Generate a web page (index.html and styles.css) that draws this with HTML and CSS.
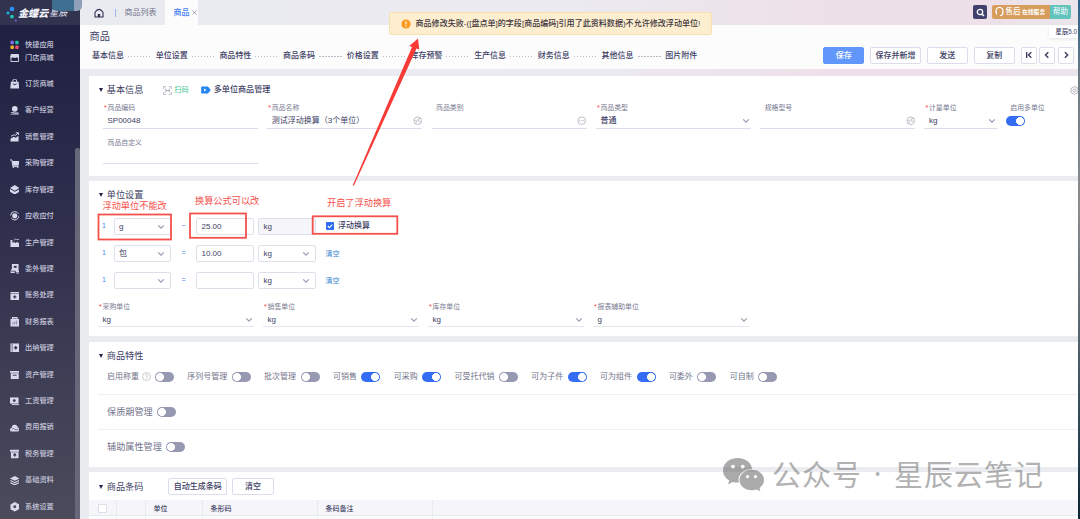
FILE: index.html
```html
<!DOCTYPE html>
<html>
<head>
<meta charset="utf-8">
<title>商品</title>
<link rel="stylesheet" href="styles.css">
</head>
<body>
<svg class="defs" width="0" height="0">
  <symbol id="chev" viewBox="0 0 8 6"><path d="M1.2 1.4 4 4.2 6.8 1.4" fill="none" stroke="#9a9cb2" stroke-width="1.2"/></symbol>
  <symbol id="globe" viewBox="0 0 10 10"><g fill="none" stroke="#b4b5c0" stroke-width=".9"><circle cx="5" cy="5" r="4"/><path d="M1.2 4.2C3 5.6 4.500 5 5.500 3.200L8.200 2.400M5 4.500 8.500 6.500M2.500 8 4.500 5.500"/></g></symbol>
</svg>
<div class="app">
  <aside class="side">
    <div class="brand">
      <svg class="logo" width="12" height="16" viewBox="0 0 12 16"><circle cx="6" cy="3" r="2.300" fill="#2f8df5"/><circle cx="2" cy="7" r="1.500" fill="#20b7e8"/><circle cx="6" cy="10.600" r="1.900" fill="#1fc7b5"/><circle cx="9.800" cy="14.600" r="1.100" fill="#7a5bd8"/></svg>
      <span class="brand-a">金蝶云</span><span class="brand-b">星辰</span>
    </div>
    <nav class="menu">
      <a class="mi first"><svg viewBox="0 0 10 10"><rect x=".5" y=".8" width="3.600" height="3.600" rx="1" fill="#8a6cf0"/><rect x="5.500" y=".8" width="3.600" height="3.600" rx="1" fill="#1cc8a8"/><rect x=".5" y="5.800" width="3.600" height="3.600" rx="1" fill="#f7b52c"/><rect x="5.500" y="5.800" width="3.600" height="3.600" rx="1" fill="#f0506e"/></svg>快捷应用</a>
      <a class="mi second"><svg viewBox="0 0 10 10"><path d="M1 1h8l1 3.500q-1.500 1.500-3 0-2 1.500-4 0-1.500 1.500-3 0z"/><path d="M1 5v4h8V5" fill="none" stroke="#d9d9ee"/></svg>门店商城</a>
      <a class="mi"><svg viewBox="0 0 10 10"><path d="M1 3h8l.7 7H.3z"/><path d="M3 4V2a2 2 0 0 1 4 0v2" fill="none" stroke="#d9d9ee" stroke-width="1"/><path d="M3 5q2 2 4 0" fill="none" stroke="#2a2a49"/></svg>订货商城</a>
      <a class="mi"><svg viewBox="0 0 10 10"><circle cx="5" cy="3" r="3"/><path d="M1 7.500q2-1.500 3 0h5M.5 9.500h9" fill="none" stroke="#d9d9ee" stroke-width="1.100"/></svg>客户经营</a>
      <a class="mi"><svg viewBox="0 0 10 10"><path d="M.5 7 4 5l2 1 3-2v6H.5z"/><path d="M1 4.500 4 3l2 .5L8.500 1M6 .8h3v2.500" fill="none" stroke="#d9d9ee"/></svg>销售管理</a>
      <a class="mi"><svg viewBox="0 0 10 10"><path d="M2 2h8L9 7H3z"/><path d="M0 1h2l1 7h6" fill="none" stroke="#d9d9ee"/><circle cx="3.500" cy="9.200" r=".8"/><circle cx="8.300" cy="9.200" r=".8"/></svg>采购管理</a>
      <a class="mi"><svg viewBox="0 0 10 10"><path d="M5 0l5 3.200L5 6 0 3.200zM0 4.300 5 7.200l5-2.900V7L5 10 0 7z"/></svg>库存管理</a>
      <a class="mi"><svg viewBox="0 0 10 10"><circle cx="5" cy="5" r="4.400" fill="none" stroke="#d9d9ee" stroke-dasharray="11 2.800"/><circle cx="5" cy="5" r="2.700"/></svg>应收应付</a>
      <a class="mi"><svg viewBox="0 0 10 10"><path d="M.5 2h2v3L5 4v1.500L8 4v1h1.500v5h-9z"/><path d="M4 2.500q1.500-2 3-1t3-.5" fill="none" stroke="#d9d9ee" stroke-width=".8"/></svg>生产管理</a>
      <a class="mi"><svg viewBox="0 0 10 10"><path d="M2 0h7v7h1v1.500H6V7H1V5.500h1z"/><path d="M0 8h5v1.500H1zM6 9h4v1H7z"/><path d="M4 2h3v2H4z" fill="#34344f"/></svg>委外管理</a>
      <a class="mi"><svg viewBox="0 0 10 10"><path d="M.5 1h9v1.400h-9zM.5 3h9v6.500h-9z"/><path d="M5 4.500v3.500M3.300 6.200h3.400" stroke="#34344f" stroke-width="1.200"/></svg>账务处理</a>
      <a class="mi"><svg viewBox="0 0 10 10"><path d="M2 0h6v2h1.500v8h-9V2H2z"/><path d="M3 5.500V8M5 4.500V8M7 3.800V8M3 1.500h4" stroke="#6f6f90" stroke-width=".8"/></svg>财务报表</a>
      <a class="mi"><svg viewBox="0 0 10 10"><path d="M.5.500h9v9h-9z"/><path d="M2.300 1v8" stroke="#39394f" stroke-width=".7"/><path d="M6 3 8 5 6 7 4 5z" fill="#39394f"/></svg>出纳管理</a>
      <a class="mi"><svg viewBox="0 0 10 10"><path d="M0 1h10v2H0zM.8 3.500h8.400V9.500H.8z"/><path d="M3 5.500h4" stroke="#39394f"/></svg>资产管理</a>
      <a class="mi"><svg viewBox="0 0 10 10"><path d="M0 1.500h9v6.500H0z"/><path d="M2 9h8V3" fill="none" stroke="#d9d9ee"/><circle cx="4.500" cy="4.800" r="1.500" fill="#3c3c52"/></svg>工资管理</a>
      <a class="mi"><svg viewBox="0 0 10 10"><path d="M2 5a3 3 0 0 1 6-.5A2.300 2.300 0 0 1 8 9H2A2 2 0 0 1 2 5z"/><path d="M2 6.500q2-1.500 3 0t4 0" fill="none" stroke="#44445a" stroke-width=".7"/></svg>费用报销</a>
      <a class="mi"><svg viewBox="0 0 10 10"><path d="M0 .8h10v2H0zM1 3.300h8v6.400H1z"/><path d="M5 4.600v3.200M3.500 6.200h3" stroke="#44445a" stroke-width="1.700"/></svg>税务管理</a>
      <a class="mi"><svg viewBox="0 0 10 10"><path d="M5 0l5 2.500L5 5 0 2.500z"/><path d="M.4 4.800 5 7l4.600-2.200M.4 7 5 9.300 9.600 7" fill="none" stroke="#d9d9ee" stroke-width="1.200"/></svg>基础资料</a>
      <a class="mi"><svg viewBox="0 0 10 10"><path d="M5 0l4.500 2.500v5L5 10 .5 7.500v-5z"/><circle cx="5" cy="5" r="1.500" fill="#44445a"/></svg>系统设置</a>
    </nav>
    <div class="side-scroll"></div>
    <div class="blob"></div>
  </aside>

  <main class="main">
    <div class="tabs">
      <svg class="home" width="10" height="10" viewBox="0 0 10 10"><path d="M1 4.200Q5-1.500 9 4.200V9H1z" fill="none" stroke="#303050" stroke-width="1.100"/><path d="M3.800 9V6h2.400v3z" fill="#303050"/></svg>
      <i class="tab-sep"></i>
      <span class="tab">商品列表</span>
      <span class="tab on">商品<svg width="5" height="5" viewBox="0 0 5 5"><path d="M.5.500l4 4M4.500.500l-4 4" stroke="#8c8ea3" stroke-width=".8"/></svg></span>
      <div class="tools">
        <span class="search"><svg width="9" height="9" viewBox="0 0 9 9"><circle cx="4" cy="4" r="2.700" fill="none" stroke="#fff" stroke-width="1.300"/><path d="M6 6l2 2" stroke="#fff" stroke-width="1.400"/></svg></span>
        <span class="service"><svg width="9" height="10" viewBox="0 0 9 10"><path d="M1 6V4a3.500 3.500 0 0 1 7 0v2M8 5.500Q8 8.500 5 8.800M1.500 4.500v3M7.500 4.500v3" fill="none" stroke="#fff" stroke-width="1.100"/></svg><b>售后</b><small>在线服务</small></span>
        <span class="help">帮助</span>
      </div>
    </div>

    <header class="head">
      <div class="head-title">商品</div>
      <div class="head-row">
        <div class="steps">
          <span>基本信息</span><i></i><span>单位设置</span><i></i><span>商品特性</span><i></i><span>商品条码</span><i></i><span>价格设置</span><i></i><span>库存预警</span><i></i><span>生产信息</span><i></i><span>财务信息</span><i></i><span>其他信息</span><i></i><span>图片附件</span>
        </div>
        <div class="acts">
          <button class="btn primary">保存</button><button class="btn wide">保存并新增</button><button class="btn">发送</button><button class="btn">复制</button>
          <div class="pager">
            <button class="sq"><svg viewBox="0 0 8 8"><path d="M1.700 1v6M6.300 1.200 3.500 4l2.800 2.800"/></svg></button>
            <button class="sq"><svg viewBox="0 0 8 8"><path d="M5.300 1.200 2.500 4l2.800 2.800"/></svg></button>
            <button class="sq"><svg viewBox="0 0 8 8"><path d="M2.900 1.200 5.700 4 2.900 6.800"/></svg></button>
          </div>
        </div>
      </div>
      <div class="version">星辰5.0</div>
    </header>

    <section class="card basic">
      <div class="card-title"><i class="tri"></i><h2>基本信息</h2>
        <svg class="scan" width="9" height="9" viewBox="0 0 9 9"><path d="M.6 3V.6H3M6 .6h2.400V3M8.400 6v2.400H6M3 8.400H.6V6M2.800 2.500v4M6.200 2.500v4M2 4.500h5" fill="none" stroke="#a5a6b2" stroke-width=".8"/></svg><span class="green">扫码</span>
        <svg class="video" width="10" height="8" viewBox="0 0 10 8"><path d="M1 .5h6L9.700 4 7 7.500H1q-.8 0-.8-.8V1.300Q.2.500 1 .5z" fill="#2484f2"/><path d="M3 2.400 5.500 4 3 5.600z" fill="#fff"/></svg><span class="multi">多单位商品管理</span>
        <svg class="gear" width="9" height="9" viewBox="0 0 10 10"><path d="M5 .6 8.900 2.800v4.400L5 9.400 1.100 7.200V2.800z" fill="none" stroke="#a9aab6"/><circle cx="5" cy="5" r="1.700" fill="none" stroke="#a9aab6"/></svg>
      </div>
      <div class="fields">
        <div class="field"><label><em>*</em>商品编码</label><div class="val">SP00048</div></div>
        <div class="field"><label><em>*</em>商品名称</label><div class="val">测试浮动换算（3个单位）<svg class="ic"><use href="#globe"/></svg></div></div>
        <div class="field"><label><em></em>商品类别</label><div class="val"><svg class="ic" viewBox="0 0 10 10"><g fill="none" stroke="#b4b5c0" stroke-width=".9"><circle cx="5" cy="5" r="4"/><path d="M2.200 5h1.400M4.300 5h1.400M6.400 5h1.400"/></g></svg></div></div>
        <div class="field"><label><em>*</em>商品类型</label><div class="val strong">普通<svg class="dn"><use href="#chev"/></svg></div></div>
        <div class="field"><label><em></em>规格型号</label><div class="val"><svg class="ic"><use href="#globe"/></svg></div></div>
        <div class="field short"><label><em>*</em>计量单位</label><div class="val">kg<svg class="dn"><use href="#chev"/></svg></div></div>
        <div class="field sw"><label>启用多单位</label><i class="toggle on"></i></div>
      </div>
      <div class="fields two">
        <div class="field"><label><em></em>商品自定义</label><div class="val"></div></div>
      </div>
    </section>

    <section class="card units">
      <div class="card-title"><i class="tri"></i><h2>单位设置</h2></div>
      <div class="urow"><span class="one">1</span><div class="box">g<svg class="dn"><use href="#chev"/></svg></div><span class="eq">~</span><div class="box">25.00</div><div class="box off">kg</div><span class="chk"><svg width="8" height="8" viewBox="0 0 8 8"><rect width="8" height="8" rx="1" fill="#2c6bf2"/><path d="M1.800 4 3.500 5.700 6.400 2.500" fill="none" stroke="#fff" stroke-width="1.100"/></svg>浮动换算</span></div>
      <div class="urow"><span class="one">1</span><div class="box">包<svg class="dn"><use href="#chev"/></svg></div><span class="eq">=</span><div class="box">10.00</div><div class="box">kg<svg class="dn"><use href="#chev"/></svg></div><span class="clear">清空</span></div>
      <div class="urow"><span class="one">1</span><div class="box"><svg class="dn"><use href="#chev"/></svg></div><span class="eq">=</span><div class="box"></div><div class="box">kg<svg class="dn"><use href="#chev"/></svg></div><span class="clear">清空</span></div>
      <div class="fields ufields">
        <div class="field"><label><em>*</em>采购单位</label><div class="val">kg<svg class="dn"><use href="#chev"/></svg></div></div>
        <div class="field"><label><em>*</em>销售单位</label><div class="val">kg<svg class="dn"><use href="#chev"/></svg></div></div>
        <div class="field"><label><em>*</em>库存单位</label><div class="val">kg<svg class="dn"><use href="#chev"/></svg></div></div>
        <div class="field"><label><em>*</em>报表辅助单位</label><div class="val">g<svg class="dn"><use href="#chev"/></svg></div></div>
      </div>
    </section>

    <section class="card traits">
      <div class="card-title"><i class="tri"></i><h2>商品特性</h2></div>
      <div class="switches">
        <span>启用称重<svg class="q" width="9" height="9" viewBox="0 0 9 9"><g fill="none" stroke="#b4b5c0" stroke-width=".7"><circle cx="4.500" cy="4.500" r="4"/><path d="M3.200 3.600q0-1.300 1.300-1.300t1.300 1.200q0 .8-1.300 1.300v.7M4.500 6.200v.8"/></g></svg><i class="toggle"></i></span>
        <span>序列号管理<i class="toggle"></i></span>
        <span>批次管理<i class="toggle"></i></span>
        <span>可销售<i class="toggle on"></i></span>
        <span>可采购<i class="toggle on"></i></span>
        <span>可受托代销<i class="toggle"></i></span>
        <span>可为子件<i class="toggle on"></i></span>
        <span>可为组件<i class="toggle on"></i></span>
        <span>可委外<i class="toggle"></i></span>
        <span>可自制<i class="toggle"></i></span>
      </div>
      <div class="trait">保质期管理<i class="toggle"></i></div>
      <div class="trait">辅助属性管理<i class="toggle"></i></div>
    </section>

    <section class="card codes">
      <div class="card-title"><i class="tri"></i><h2>商品条码</h2><button class="btn auto">自动生成条码</button><button class="btn">清空</button></div>
      <div class="thead"><span><i class="cb"></i></span><span></span><span>单位</span><span>条形码</span><span>条码备注</span><span></span></div>
      <div class="trow"><span></span><span></span><span></span><span></span><span></span><span></span></div>
    </section>
  </main>
  <div class="edge"></div>
</div>

<div class="toast"><svg width="10" height="10" viewBox="0 0 10 10"><circle cx="5" cy="5" r="4.600" fill="#fb9a1e"/><path d="M5 2.200v3.400M5 6.600v1.200" stroke="#fff" stroke-width="1.100"/></svg>商品修改失败-([盘点单]的字段[商品编码]引用了此资料数据)不允许修改浮动单位!</div>

<svg class="marks" width="1080" height="519" viewBox="0 0 1080 519">
  <path d="M352.700 185.500 412 47 409.300 46 418 38.500 419.300 49.500 416.500 48.500 354 185.500z" fill="#f93b38"/>
  <g fill="none" stroke="#f4504c" stroke-width="1.800"><rect x="98.500" y="214.500" width="72.500" height="25"/><rect x="190" y="213.500" width="56" height="24.300"/><rect x="312.700" y="216.300" width="84.600" height="17.500"/></g>
</svg>
<div class="note n1">浮动单位不能改</div>
<div class="note n2">换算公式可以改</div>
<div class="note n3">开启了浮动换算</div>

<div class="wm">
  <svg width="42" height="34" viewBox="0 0 42 34"><path d="M14.500 0C22.500 0 29 5 29 11.200 21 11 15.500 16 15.500 21.500c0 1 .2 2 .5 3-2 .2-4.500 0-6.500-.6L5 26.500l1.200-4.300C2.300 20 0 16.300 0 12.400 0 5.500 6.500 0 14.500 0z"/><path d="M28.800 11.800c7 0 12.200 4.600 12.200 10.200 0 3.300-1.800 6-4.500 8l.9 3.200-3.600-1.800c-1.600.5-3.300.8-5 .8-7 0-12.300-4.500-12.300-10.200 0-5.600 5.300-10.200 12.300-10.200z"/><g fill="#fff"><circle cx="10" cy="8.600" r="1.900"/><circle cx="19.700" cy="8.600" r="1.900"/><circle cx="24.500" cy="18.600" r="1.600"/><circle cx="32.500" cy="18.600" r="1.600"/></g></svg>
  <span>公众号</span><span class="dot">·</span><span>星辰云笔记</span>
</div>
</body>
</html>
```
FILE: styles.css
```css
* { box-sizing: border-box; }
body {
  margin: 0; width: 1080px; height: 519px; overflow: hidden; position: relative;
  font-family: "Liberation Sans", "Noto Sans CJK SC", sans-serif;
  font-size: 8px; line-height: 12px; color: #3d3e64; white-space: nowrap;
}
.defs { position: absolute; }
svg { flex: none; display: block; }
i, em { font-style: normal; flex: none; }
button { font: inherit; color: inherit; padding: 0; margin: 0; }
.app { display: flex; width: 1080px; height: 519px; overflow: hidden; }

/* sidebar */
.side { position: relative; width: 80px; flex: none; background: linear-gradient(#1f1f41, #2b2b4b 35%, #4b4b5c); }
.brand { height: 25px; display: flex; align-items: center; padding: 1px 0 0 6px; background: #32334f; color: #f1f1f8; }
.logo { margin-top: 1px; }
.brand-a { font: italic 900 10.100px/14px "Noto Sans CJK SC", sans-serif; }
.brand-b { font: italic 500 9px/14px "Noto Sans CJK SC", sans-serif; margin-left: 1px; color: #c9c9d9; }
.menu { display: flex; flex-direction: column; color: #c6c6da; font-size: 7.200px; }
.mi { height: 26.430px; display: flex; align-items: center; gap: 6px; padding-left: 9.500px; flex: none; font-weight: 500; }
.mi svg { width: 9.500px; height: 9.500px; fill: #d9d9ee; }
.mi.first { height: 13px; margin-top: 13px; }
.mi.second { height: 13px; margin-bottom: 6.800px; }
.side-scroll { position: absolute; left: 75px; top: 148px; width: 4.500px; bottom: 0; background: #67677a; border-radius: 2px 2px 0 0; }
.blob { position: absolute; left: 52px; top: 0; width: 30px; height: 11px; border-radius: 0 0 5px 5px; background: linear-gradient(90deg, #3e6f91 0 22px, #8fa0b8 22px); z-index: 2; }

/* main */
.main { width: 998px; flex: none; display: flex; flex-direction: column; background: linear-gradient(90deg, #e9ebf0, #ebeaf0 50%, #eee0e8 75%, #eee0e8 90%, #ebe6ec) 0 0 / 100% 76px no-repeat, #ebecf0; }
.edge { width: 2px; flex: none; background: linear-gradient(#29618c, #6d7c85 15%, #8b8d8f 40%, #334a59 80%, #0b2536); }
.tabs { height: 25px; display: flex; align-items: center; flex: none; padding-left: 14px; }
.home { margin-right: 11px; }
.tab-sep { width: 1px; height: 8px; background: #9db5ec; }
.tab { padding: 0 8px 0 8.500px; color: #73748c; }
.tab.on { align-self: stretch; display: flex; align-items: center; gap: 2.500px; padding: 0 0 0 9px; width: 33px; background: #fcfcfd; color: #3f7bf5; font-weight: 500; }
.tools { margin-left: auto; display: flex; align-items: center; height: 14px; padding-right: 7px; margin-top: -1px; color: #fff; }
.search { width: 14px; height: 14px; border-radius: 2px; background: #41426c; display: grid; place-items: center; margin-right: 4.500px; }
.service { width: 58px; height: 14px; background: #d69d5d; border-radius: 2px 0 0 2px; display: flex; align-items: center; padding-left: 3.500px; gap: 1.500px; }
.service b { font-size: 7.500px; font-weight: 500; }
.service small { font-size: 5.800px; font-weight: 700; }
.help { width: 21px; height: 14px; margin-left: .5px; background: #62c4bd; border-radius: 0 2px 2px 0; text-align: center; line-height: 13px; font-size: 7.500px; }

.head { position: relative; height: 44px; flex: none; background: #fcfcfd; padding: 4px 0 0 9.500px; margin-bottom: 7px; }
.head-title { font-size: 10.200px; line-height: 15px; height: 17px; }
.head-row { display: flex; align-items: center; height: 18px; padding: 0 4.300px 0 2.500px; }
.steps { display: flex; align-items: center; font-weight: 500; padding-top: 2px; }
.steps i { width: 23.700px; margin: 0 4px; height: 1px; background: repeating-linear-gradient(90deg, #bbbcc8 0 1.500px, transparent 1.500px 3px); }
.acts { margin-left: auto; display: flex; align-items: center; gap: 6px; }
.btn { height: 17px; width: 41px; border: 1px solid #dcdcea; border-radius: 2px; background: #fff; font-weight: 500; line-height: 14px; padding-top: 1px; }
.btn.wide { width: 50.500px; }
.btn.primary { background: #6197fb; border-color: #6197fb; color: #fff; }
.pager { display: flex; gap: 2.500px; }
.sq { width: 16px; height: 17px; border: 1px solid #dcdcea; border-radius: 2px; background: #fff; display: grid; place-items: center; }
.sq svg { width: 8px; height: 8px; fill: none; stroke: #34355c; stroke-width: 1.300; }
.version { position: absolute; right: 0; top: 1px; width: 29.500px; height: 12px; padding-left: 7px; background: #fff; font-size: 6.400px; font-weight: 500; box-shadow: 0 1px 3px #0000001a; }

/* cards */
.card { background: #fff; margin-left: 9px; flex: none; }
.card-title { display: flex; align-items: center; height: 14px; padding-left: 9.500px; }
.tri { width: 0; height: 0; border: 2.500px solid transparent; border-top: 4px solid #22234a; border-bottom: 0; }
h2 { margin: 0 0 0 4.300px; font-size: 9.150px; line-height: 14px; font-weight: 400; }
.basic { height: 99.500px; padding-top: 7px; margin-bottom: 5px; }
.scan { margin: 0 2.500px 0 19.500px; }
.green { color: #3cc790; font-size: 7.200px; }
.video { margin: 0 3px 0 12px; }
.multi { font-weight: 500; font-size: 8.100px; }
.gear { margin-left: auto; margin-right: -1px; }
.fields { display: flex; gap: 9.300px; padding: 5px 0 0 14px; }
.field { width: 155px; flex: none; }
.field label { display: flex; height: 12px; line-height: 12px; font-size: 6.900px; color: #7a7b92; }
.field em { width: 4.500px; padding-left: 1px; color: #f5403c; }
.val { display: flex; align-items: center; height: 15px; padding: 0 0 0 4.500px; border-bottom: 1px solid #dcdceb; }
.val.strong { font-weight: 500; }
.val svg { margin-left: auto; }
.ic { width: 9.500px; height: 9.500px; }
.dn { width: 8px; height: 6px; margin-right: 1px; }
.short { width: 73px; }
.sw label { padding-left: 3.500px; }
.sw .toggle { margin: 1.500px 0 0 -1px; }
.toggle { display: block; width: 19px; height: 10px; border-radius: 5px; background: radial-gradient(circle at 5px 5px, #fff 3.700px, transparent 4.300px) #9799b2; }
.toggle.on { background: radial-gradient(circle at 14px 5px, #fff 3.700px, transparent 4.300px) #346cf3; }
.two { padding-top: 8px; }

.units { height: 155.500px; padding-top: 7.500px; margin-bottom: 5.500px; }
.urow { display: flex; align-items: center; height: 17px; margin-top: 10px; padding-left: 13px; }
.units .card-title + .urow { margin-top: 15.500px; }
.one, .eq { color: #4386f0; font-size: 7px; text-align: center; }
.one { width: 4px; margin-right: 7.500px; }
.eq { width: 25px; }
.box { width: 57.500px; height: 17px; border: 1px solid #dfdfea; border-radius: 2px; display: flex; align-items: center; padding: 1px 5px 0 4.500px; }
.box svg { margin-left: auto; margin-right: 0; }
.box + .box { margin-left: 4.500px; }
.box.off { background: #f5f5fa; }
.chk { display: flex; align-items: center; gap: 4.500px; margin-left: 10px; font-weight: 500; }
.clear { margin-left: 10px; font-size: 7px; color: #3483cf; padding-top: 2px; }
.ufields { padding: 12px 0 0 9px; gap: 9px; }
.ufields .field { width: 156px; }
.ufields .val { height: 14px; border-color: #e6e6ef; padding-top: 1px; }

.traits { height: 125.500px; padding-top: 7.500px; margin-bottom: 5px; }
.switches { display: flex; align-items: center; height: 31px; margin-left: 9px; padding: 0 0 4px 9px; gap: 13.300px; color: #73748c; }
.switches span, .trait { display: flex; align-items: center; gap: 4.500px; }
.q { margin-left: -1.500px; margin-right: -.5px; }
.trait { height: 35px; margin-left: 9px; padding-left: 9px; border-top: 1px solid #f0f0f3; font-size: 9.150px; color: #73748c; }

.codes { height: 47px; padding-top: 6px; }
.codes .card-title { height: 17px; margin-bottom: 5px; }
.codes .btn { margin-left: 5px; width: 41.500px; font-weight: 500; }
.codes .auto { margin-left: 25px; width: 59px; }
.thead, .trow { display: grid; grid-template-columns: 28px 29px 57px 115px 114.500px 1fr; }
.thead { height: 16px; background: #f5f5fa; border-bottom: 1px solid #e9e9f0; font-size: 7px; font-weight: 500; line-height: 17px; }
.thead span { border-right: 1px solid #e9e9f0; padding-left: 7.500px; }
.trow { height: 3px; }
.trow span { border-right: 1px solid #eeeef3; }
.thead span:last-child, .trow span:last-child { border: 0; }
.cb { display: block; width: 9px; height: 9px; margin: 4px 0 0 1.500px; border: 1px solid #dedee8; border-radius: 1px; background: #fff; }

/* overlays */
.toast { position: absolute; left: 389px; top: 12px; width: 323px; height: 23px; display: flex; align-items: center; gap: 5px; padding-left: 10.500px; background: #fdeecf; border: 1px solid #fbe0af; border-radius: 2px; font-size: 8.050px; color: #3c3540; font-weight: 500; }
.marks { position: absolute; left: 0; top: 0; }
.note { position: absolute; font-size: 9.200px; line-height: 12px; color: #f5504c; }
.n1 { left: 102.500px; top: 200px; }
.n2 { left: 195px; top: 195px; }
.n3 { left: 327px; top: 197px; }
.wm { position: absolute; left: 723px; top: 455px; height: 40px; display: flex; align-items: center; color: #606060; opacity: .48; font: 400 30px/40px "Noto Sans CJK SC", sans-serif; }
.wm svg { fill: #505050; margin-right: 7px; }
.wm span { font-size: 29px; letter-spacing: 1px; margin-top: -5px; }
.wm .dot { width: 32px; text-align: center; font-family: "Noto Sans", sans-serif; }
```
